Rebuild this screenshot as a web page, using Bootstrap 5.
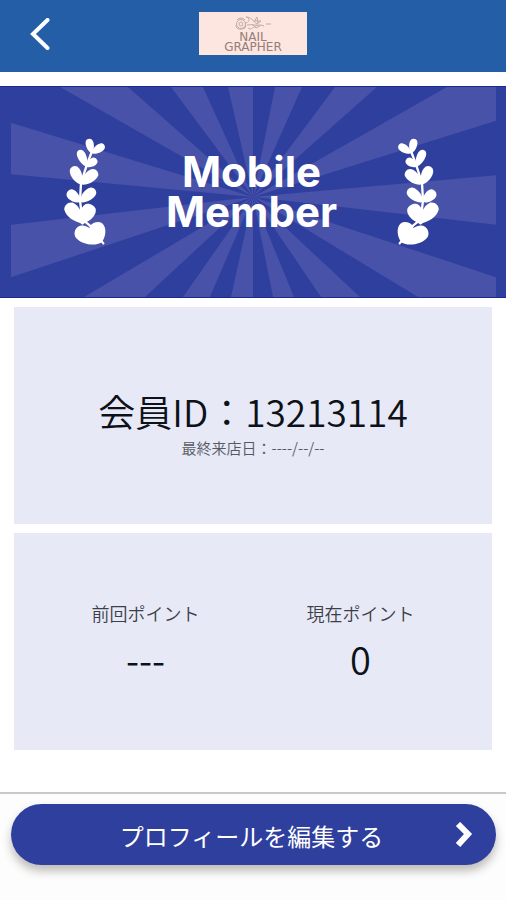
<!DOCTYPE html>
<html lang="ja">
<head>
<meta charset="utf-8">
<meta name="viewport" content="width=device-width, initial-scale=1">
<title>Mobile Member</title>
<link href="https://cdn.jsdelivr.net/npm/bootstrap@5.3.0/dist/css/bootstrap.min.css" rel="stylesheet">
<style>
  body { font-family: "Noto Sans CJK JP", sans-serif; font-weight: 350; color: #0d1118; }
  .app-bar { background: #235ea6; height: 72px; padding: 0 28px; }
  .back-link, .bar-side { width: 24px; }
  .brand-logo { width: 108px; height: 43px; margin-top: -6px; background: #fde6e0; color: #957d79; font: 12px/10px "DejaVu Sans", sans-serif; }
  .brand-logo svg { margin-top: 4px; margin-bottom: 1px; }
  .member-banner { margin-top: 14px; height: 212px; padding: 0 58px 0 55px; background: #2f3f9e; border-top: 1px solid #1a2890; border-bottom: 1px solid #1a2890; }
  .banner-title { font: 700 42px/40px Inter, "Liberation Sans", sans-serif; color: #fff; }
  .panels { padding: 9px 14px 0; gap: 9px; }
  .info-panel { background: #e7e9f6; min-height: 217px; }
  .id-panel { padding-top: 12px; }
  .member-id { font-size: 37px; line-height: 52px; }
  .last-visit { font-size: 15px; line-height: 22px; color: #555861; }
  .point-label { font-size: 18px; line-height: 28px; color: #3c3f47; }
  .point-value { font-size: 38px; line-height: 52px; margin-top: 6px; }
  .bottom-bar { height: 108px; padding: 10px 10px 0 11px; border-top: 2px solid #c9c9c9; background: #fdfdfd; }
  .edit-btn, .edit-btn:hover { height: 61px; background: #2f3f9e; color: #fff; font-size: 24px; font-weight: 400; line-height: 32px; box-shadow: 0 6px 10px rgba(60, 50, 40, .32); padding: 2px 22px 0; }
</style>
</head>
<body class="bg-white">
<svg width="0" height="0" class="position-absolute" aria-hidden="true">
  <defs>
    <path id="leaf" d="M0 0C-.3-.1-.58-.62-.34-.9C-.18-1.05.18-1.05.34-.9C.58-.62.3-.1 0 0z"/>
    <g id="laurel" fill="#fff">
      <path d="M110 60L95 100L78 153L75 206L82 262L104 280L145 334" fill="none" stroke="#fff" stroke-width="7" stroke-linecap="round" stroke-linejoin="round"/>
      <use href="#leaf" transform="translate(110 64) rotate(-12) scale(28 44)"/>
      <use href="#leaf" transform="translate(110 64) rotate(56) scale(28 45)"/>
      <use href="#leaf" transform="translate(95 104) rotate(-25) scale(30 54)"/>
      <use href="#leaf" transform="translate(95 104) rotate(53) scale(28 37)"/>
      <use href="#leaf" transform="translate(78 157) rotate(-25) scale(38 58)"/>
      <use href="#leaf" transform="translate(78 157) rotate(50) scale(40 62)"/>
      <use href="#leaf" transform="translate(75 210) rotate(-48) scale(36 48)"/>
      <use href="#leaf" transform="translate(75 210) rotate(50) scale(38 58)"/>
      <use href="#leaf" transform="translate(82 272) rotate(-40) scale(48 72)"/>
      <use href="#leaf" transform="translate(82 272) rotate(28) scale(50 60)"/>
      <path d="M52 254L82 278L106 262L100 232L62 236z"/>
      <use href="#leaf" transform="translate(137 332) rotate(-14) scale(54 62)"/>
      <use href="#leaf" transform="translate(137 332) rotate(-63) scale(56 84)"/>
      <path d="M90 328L140 332L134 296L110 292z"/>
    </g>
  </defs>
</svg>
<div class="d-flex flex-column min-vh-100">
  <header class="app-bar d-flex align-items-center justify-content-between">
    <a class="back-link d-flex" href="#" aria-label="戻る">
      <svg width="24" height="36" viewBox="0 0 24 36" fill="none" stroke="#fff" stroke-width="4" stroke-linecap="round" stroke-linejoin="miter"><path d="M19.500 2L5 16L19.500 30"/></svg>
    </a>
    <div class="brand-logo d-flex flex-column align-items-center">
      <svg width="38" height="15" viewBox="0 0 38 15" fill="none" stroke="#c4aaa6" stroke-width="1" aria-hidden="true">
        <circle cx="7" cy="8" r="4.500"/><circle cx="7" cy="8" r="2"/>
        <path d="M3 4Q7 0 11 4M2 9Q2 14 8 13Q12 13 12 9M11 7C15 7 17 2 12 1C17 1 19 5 23 8M13 9C18 8 23 10 27 9M20 6L23 1L24 7M21 5L27 5L23 8M14 12C17 15 20 10 24 9M18 8L22 12L26 10M27 9L30 10M32 8L37 8"/>
      </svg>
      <span>NAIL</span><span>GRAPHER</span>
    </div>
    <span class="bar-side"></span>
  </header>
  <section class="member-banner position-relative d-flex align-items-center justify-content-between">
    <svg class="position-absolute top-0 start-0 w-100 h-100" viewBox="0 0 506 212" preserveAspectRatio="none" fill="#4752a8" aria-hidden="true">
      <path d="M253 111L60 0H128zM253 111L171 0H203zM253 111L228 0H253zM253 111L275 0H302zM253 111L335 0H377zM253 111L447 0H496V34zM253 111L496 89V139zM253 111L496 192V212H418zM253 111L360 212H321zM253 111L294 212H273zM253 111L231 212H253zM253 111L183 212H210zM253 111L84 212H145zM253 111L11 139V192zM253 111L11 36V88z"/>
    </svg>
    <svg class="position-relative" width="60" height="120" viewBox="0 0 180 360" aria-hidden="true"><use href="#laurel"/></svg>
    <h1 class="banner-title position-relative text-center m-0">Mobile<br>Member</h1>
    <svg class="position-relative" width="60" height="120" viewBox="0 0 180 360" aria-hidden="true"><use href="#laurel" transform="translate(180 0) scale(-1 1)"/></svg>
  </section>
  <main class="panels d-flex flex-column">
    <section class="info-panel id-panel d-flex flex-column align-items-center justify-content-center text-center">
      <div class="member-id">会員ID：13213114</div>
      <div class="last-visit">最終来店日：----/--/--</div>
    </section>
    <section class="info-panel d-flex align-items-center text-center px-4">
      <div class="row g-0 w-100">
        <div class="col-6">
          <div class="point-label">前回ポイント</div>
          <div class="point-value">---</div>
        </div>
        <div class="col-6">
          <div class="point-label">現在ポイント</div>
          <div class="point-value">0</div>
        </div>
      </div>
    </section>
  </main>
  <footer class="bottom-bar mt-auto">
    <button type="button" class="edit-btn btn border-0 rounded-pill w-100 d-flex align-items-center">
      <span class="flex-grow-1 ps-3">プロフィールを編集する</span>
      <svg width="20" height="28" viewBox="0 0 20 28" fill="none" stroke="#fff" stroke-width="6" aria-hidden="true"><path d="M4 2L14 12L4 23"/></svg>
    </button>
  </footer>
</div>
<script src="https://cdn.jsdelivr.net/npm/bootstrap@5.3.0/dist/js/bootstrap.bundle.min.js"></script>
</body>
</html>
